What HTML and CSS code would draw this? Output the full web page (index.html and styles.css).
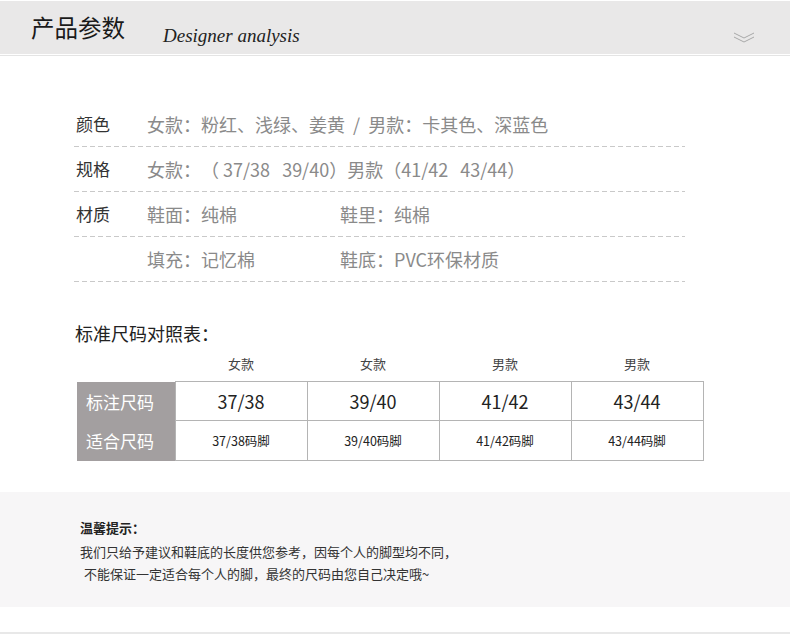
FILE: index.html
```html
<!DOCTYPE html>
<html lang="zh">
<head>
<meta charset="utf-8">
<link rel="stylesheet" href="styles.css">
</head>
<body>
<div class="page">
  <header class="head">
    <h1 class="head-title">产品参数</h1>
    <span class="head-sub">Designer analysis</span>
    <svg class="head-icon" width="22" height="12" viewBox="0 0 22 12">
      <polyline points="1,1 11,6 21,1" fill="none" stroke="#a8a8a8" stroke-width="1"/>
      <polyline points="1,5 11,10 21,5" fill="none" stroke="#a8a8a8" stroke-width="1"/>
    </svg>
  </header>
  <div class="head-line"></div>

  <section class="params">
    <div class="prow">
      <span class="plabel">颜色</span>
      <span class="pval">女款：粉红、浅绿、姜黄&nbsp; /&nbsp; 男款：卡其色、深蓝色</span>
    </div>
    <div class="prow">
      <span class="plabel">规格</span>
      <span class="pval">女款：（ 37/38&nbsp;&nbsp; 39/40）男款（41/42&nbsp;&nbsp; 43/44）</span>
    </div>
    <div class="prow">
      <span class="plabel">材质</span>
      <span class="pval pcol">鞋面：纯棉</span>
      <span class="pval">鞋里：纯棉</span>
    </div>
    <div class="prow">
      <span class="plabel"></span>
      <span class="pval pcol">填充：记忆棉</span>
      <span class="pval">鞋底：PVC环保材质</span>
    </div>
  </section>

  <section class="size">
    <h2 class="size-title">标准尺码对照表：</h2>
    <div class="size-heads">
      <span class="sh-blank"></span>
      <span class="sh">女款</span>
      <span class="sh">女款</span>
      <span class="sh">男款</span>
      <span class="sh">男款</span>
    </div>
    <table class="size-table">
      <tr class="r1">
        <th>标注尺码</th>
        <td>37/38</td><td>39/40</td><td>41/42</td><td>43/44</td>
      </tr>
      <tr class="r2">
        <th>适合尺码</th>
        <td>37/38码脚</td><td>39/40码脚</td><td>41/42码脚</td><td>43/44码脚</td>
      </tr>
    </table>
  </section>

  <section class="tips">
    <h3 class="tips-title">温馨提示：</h3>
    <p class="tips-text">我们只给予建议和鞋底的长度供您参考，因每个人的脚型均不同，</p>
    <p class="tips-text tips-indent">不能保证一定适合每个人的脚，最终的尺码由您自己决定哦~</p>
  </section>

  <div class="foot-line"></div>
</div>
</body>
</html>
```

FILE: styles.css
```css
* { box-sizing: border-box; }
html, body { margin: 0; padding: 0; background: #fff; }
body {
  font-family: "Noto Sans CJK SC", "Noto Sans", sans-serif;
  color: #333;
  text-spacing-trim: space-all;
}
.page { width: 790px; height: 634px; overflow: hidden; padding-top: 1px; }

.head {
  height: 53px;
  background: #e9e8e8;
  display: flex;
  align-items: center;
  padding-left: 31px;
  padding-right: 35px;
}
.head-title {
  margin: 0;
  font-size: 23.5px;
  font-weight: 400;
  color: #1a1a1a;
  line-height: 1;
  margin-top: 1px;
}
.head-sub {
  font-family: "Liberation Serif", "Times New Roman", serif;
  font-style: italic;
  font-size: 19px;
  color: #222;
  margin-left: 38px;
  margin-top: 16px;
}
.head-icon { margin-left: auto; margin-top: 20px; }
.head-line {
  height: 1px;
  margin-top: 1px;
  background: #e4e4e4;
}

.params {
  margin: 46px 0 0 74px;
  width: 611px;
}
.prow {
  height: 45px;
  display: flex;
  align-items: center;
  padding-left: 2px;
  padding-bottom: 2px;
  background: repeating-linear-gradient(to right, #c9c9c9 0 5px, transparent 5px 8px) left bottom / 100% 1px no-repeat;
}
.plabel {
  width: 71px;
  font-size: 17px;
  color: #333;
}
.pval {
  font-size: 18px;
  color: #8a8a8a;
  white-space: pre;
}
.pcol { width: 193px; }

.size { margin: 38px 0 0 75px; }
.size-title {
  margin: 0;
  font-size: 18px;
  font-weight: 400;
  color: #222;
  line-height: 26px;
}
.size-heads {
  display: flex;
  margin-top: 4px;
  height: 26px;
  align-items: center;
  padding-left: 2px;
}
.sh-blank { width: 98px; }
.sh {
  width: 132px;
  text-align: center;
  font-size: 13px;
  color: #444;
}
.size-table {
  margin: 5px 0 0 2px;
  border-collapse: collapse;
  table-layout: fixed;
}
.size-table th {
  width: 98px;
  background: #a39fa0;
  color: #fff;
  font-weight: 400;
  font-size: 17px;
  text-align: left;
  padding: 0 0 0 9px;
  border: none;
}
.size-table td {
  width: 132px;
  border: 1px solid #b4b4b4;
  text-align: center;
  color: #222;
}
.r1 th, .r1 td { height: 39px; }
.r2 th, .r2 td { height: 40px; }
.r1 td { font-size: 18px; }
.r2 td { font-size: 12.5px; }

.tips {
  margin-top: 31px;
  height: 115px;
  background: #f7f6f7;
  padding: 26px 0 0 80px;
}
.tips-title {
  margin: 0;
  font-size: 13px;
  font-weight: 700;
  color: #222;
  line-height: 20px;
}
.tips-text {
  margin: 0;
  font-size: 13px;
  color: #333;
  line-height: 22px;
}
.tips-title + .tips-text { margin-top: 3px; }
.tips-indent { padding-left: 4px; }

.foot-line {
  margin-top: 25px;
  height: 2px;
  background: #e8e8e8;
}
```
